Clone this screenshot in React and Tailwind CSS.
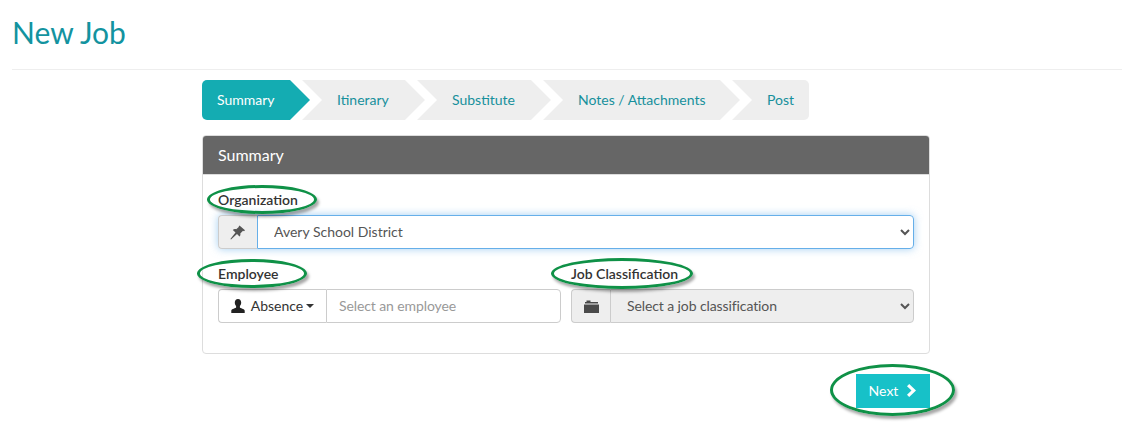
import React from "react";

const steps = [
  { label: "Summary", width: "w-[108px]", shape: "[clip-path:polygon(0_0,88px_0,100%_50%,88px_100%,0_100%)]", active: true, pad: "pl-[15px]" },
  { label: "Itinerary", width: "w-[123px]", shape: "[clip-path:polygon(0_0,103px_0,100%_50%,103px_100%,0_100%,20px_50%)]", pad: "pl-[35px]" },
  { label: "Substitute", width: "w-[134px]", shape: "[clip-path:polygon(0_0,114px_0,100%_50%,114px_100%,0_100%,20px_50%)]", pad: "pl-[35px]" },
  { label: "Notes / Attachments", width: "w-[197px]", shape: "[clip-path:polygon(0_0,177px_0,100%_50%,177px_100%,0_100%,20px_50%)]", pad: "pl-[35px]" },
  { label: "Post", width: "w-[77px]", shape: "[clip-path:polygon(0_0,100%_0,100%_100%,0_100%,20px_50%)]", pad: "pl-[35px]", last: true },
];

const Oval = ({ className }) => (
  <span
    className={`absolute rounded-[50%] border-[3px] border-[#0f9147] shadow-[2px_3px_3px_rgba(0,0,0,0.35)] pointer-events-none ${className}`}
  />
);

const PinIcon = () => (
  <svg width="16" height="15" viewBox="0 0 16 15" fill="#555">
    <path d="M9.500 0.500l5.500 4.700-1 1-1-.4-2.700 2.600c.3 1.300 0 2.400-.8 3.200L7 9 1 14.500l-.6-.5L5.500 7.400 2.800 5c.9-.9 2.100-1.100 3.400-.7L9 1.800l-.4-.4z" />
  </svg>
);

const UserIcon = () => (
  <svg width="14" height="14" viewBox="0 0 14 14" fill="#222">
    <path d="M7 0c2 0 3.200 1.500 3.200 3.600 0 1.400-.5 2.700-1.300 3.500v1.300c0 .6 4.800 1.300 4.800 3.300V14H.3v-2.300c0-2 4.800-2.700 4.800-3.300V7.100C4.300 6.300 3.800 5 3.800 3.600 3.800 1.500 5 0 7 0z" />
  </svg>
);

const FolderIcon = () => (
  <svg width="15" height="13" viewBox="0 0 15 13" fill="#4a4a4a">
    <path d="M0 4.500h15V13H0z" />
    <path d="M1 3.500V2h1.500V.5h4V2H14v1.500z" />
  </svg>
);

const ChevronIcon = () => (
  <svg width="12" height="13" viewBox="0 0 12 13" fill="white">
    <path d="M3.200 0L10 6.500 3.200 13 1 10.800 5.500 6.500 1 2.200z" />
  </svg>
);

export default function App() {
  return (
    <div className="px-3 font-['Lato',sans-serif] text-[14px] text-[#333] bg-white min-h-[433px]">
      <h1 className="text-[30px] leading-[33px] text-[#13939f] pt-4 pb-5 border-b border-[#eee]">
        New Job
      </h1>

      <div className="w-[728px] ml-[190px] mt-[10px]">
        <div className="flex">
          {steps.map((step, i) => (
            <div
              key={step.label}
              className={`h-10 pb-[2px] flex items-center ${step.width} ${step.shape} ${step.pad} ${i > 0 ? "-ml-2" : ""} ${
                step.active ? "bg-[#14acb2] text-white rounded-l-[5px]" : "bg-[#eee] text-[#17909c]"
              } ${step.last ? "rounded-r-[5px]" : ""}`}
            >
              {step.label}
            </div>
          ))}
        </div>

        <div className="mt-[15px] h-[219px] border border-[#ddd] rounded-[4px]">
          <div className="h-[39px] bg-[#666] text-white text-[16px] flex items-center px-[15px] border-b border-[#ddd] rounded-t-[3px]">
            Summary
          </div>
          <div className="px-[15px] pt-[15px]">
            <div className="relative w-fit font-semibold leading-5 mb-[5px]">
              <Oval className="-left-[11px] -top-[5px] w-[110px] h-[29px]" />
              Organization
            </div>
            <div className="flex h-[34px] rounded-[4px] shadow-[0_0_8px_rgba(102,175,233,0.6)]">
              <div className="w-[39px] flex items-center justify-center bg-[#eee] border border-[#ccc] border-r-0 rounded-l-[4px]">
                <PinIcon />
              </div>
              <select className="flex-1 min-w-0 pl-3 pb-[2px] bg-white text-[#555] border border-[#66afe9] rounded-r-[4px] outline-none">
                <option>Avery School District</option>
              </select>
            </div>

            <div className="grid grid-cols-2 gap-[10px] mt-[15px]">
              <div>
                <div className="relative w-fit font-semibold leading-5 mb-[5px]">
                  <Oval className="-left-[21px] -top-[5px] w-[110px] h-[29px]" />
                  Employee
                </div>
                <div className="flex h-[34px]">
                  <div className="w-[108px] pb-px flex items-center justify-center gap-[6px] border border-[#ccc] border-r-0 rounded-l-[4px]">
                    <UserIcon />
                    <span className="flex items-center gap-[3px] text-[#333]">
                      Absence
                      <span className="border-x-4 border-x-transparent border-t-4 border-t-[#333]" />
                    </span>
                  </div>
                  <div className="flex-1 flex items-center px-3 pb-px tracking-[-0.1px] text-[#999] border border-[#ccc] rounded-r-[4px]">
                    Select an employee
                  </div>
                </div>
              </div>
              <div>
                <div className="relative w-fit font-semibold leading-5 mb-[5px]">
                  <Oval className="-left-[20px] -top-[6px] w-[142px] h-[31px]" />
                  Job Classification
                </div>
                <div className="flex h-[34px]">
                  <div className="w-[39px] flex items-center justify-center bg-[#eee] border border-[#ccc] border-r-0 rounded-l-[4px]">
                    <FolderIcon />
                  </div>
                  <select disabled className="flex-1 min-w-0 pl-3 pb-[2px] tracking-[-0.1px] bg-[#eee] text-[#555] border border-[#ccc] rounded-r-[4px] opacity-100">
                    <option>Select a job classification</option>
                  </select>
                </div>
              </div>
            </div>
          </div>
        </div>

        <div className="flex justify-end mt-5">
          <div className="relative">
            <Oval className="-left-[26px] -top-[10px] w-[125px] h-[52px]" />
            <button className="w-[74px] h-[34px] pb-px pl-px bg-[#17c1c8] text-white flex items-center justify-center gap-2">
              Next
              <ChevronIcon />
            </button>
          </div>
        </div>
      </div>
    </div>
  );
}
